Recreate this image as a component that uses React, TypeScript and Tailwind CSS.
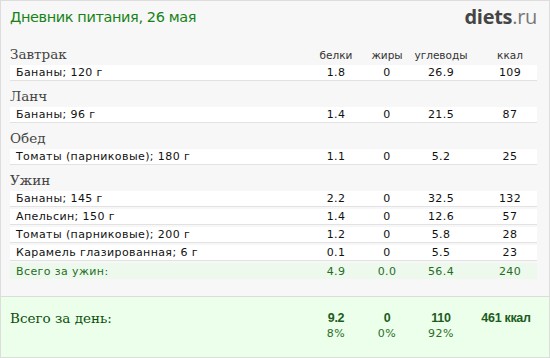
type Row = [string, string, string, string, string]

const meals: { title: string; items: Row[]; total?: Row }[] = [
  { title: 'Завтрак', items: [['Бананы; 120 г', '1.8', '0', '26.9', '109']] },
  { title: 'Ланч', items: [['Бананы; 96 г', '1.4', '0', '21.5', '87']] },
  { title: 'Обед', items: [['Томаты (парниковые); 180 г', '1.1', '0', '5.2', '25']] },
  {
    title: 'Ужин',
    items: [
      ['Бананы; 145 г', '2.2', '0', '32.5', '132'],
      ['Апельсин; 150 г', '1.4', '0', '12.6', '57'],
      ['Томаты (парниковые); 200 г', '1.2', '0', '5.8', '28'],
      ['Карамель глазированная; 6 г', '0.1', '0', '5.5', '23'],
    ],
    total: ['Всего за ужин:', '4.9', '0.0', '56.4', '240'],
  },
]

const cols = 'grid grid-cols-[1fr_50px_52px_56px_68px] items-center'

function Line({ row, total }: { row: Row; total?: boolean }) {
  return (
    <div
      className={
        cols +
        ' h-[16px] mb-[2px] text-[11px] tracking-[0.4px] font-["DejaVu_Sans",sans-serif] ' +
        (total ? 'bg-[#eef9ee] text-[#1f6e1f]' : 'bg-white border-b border-[#e2e2e2] text-[#111]')
      }
    >
      <div className="pl-[6px] leading-none">{row[0]}</div>
      <div className="text-center leading-none">{row[1]}</div>
      <div className="text-center leading-none">{row[2]}</div>
      <div className="text-center leading-none">{row[3]}</div>
      <div className="text-center pl-[14px] leading-none">{row[4]}</div>
    </div>
  )
}

export default function App() {
  return (
    <div className="w-[550px] h-[358px] bg-[#f7f7f7] border border-[#dddddd] flex flex-col overflow-hidden">
      <div className="flex justify-between items-center h-[40px] pl-[9px] pr-[12px]">
        <div className="text-[14.5px] text-[#178317] font-['DejaVu_Sans',sans-serif] tracking-[-0.4px] pb-[7px]">
          Дневник питания, 26 мая
        </div>
        <div className="font-['Open_Sans',sans-serif] text-[20px] text-[#454545] pb-[9px] tracking-[-0.3px]">
          <span className="font-bold">diets</span>
          <span className="text-[#777]">.ru</span>
        </div>
      </div>

      <div className="pl-[9px] pr-[12px]">
        {meals.map((m, i) => (
          <div key={m.title}>
            <div className={cols + ' h-[24px] items-end pb-[3px]'}>
              <div className="font-['DejaVu_Serif',serif] text-[13.5px] text-[#444] leading-[16px]">{m.title}</div>
              {i === 0 &&
                ['белки', 'жиры', 'углеводы', 'ккал'].map((h, j) => (
                  <div
                    key={h}
                    className={
                      'text-center text-[10.5px] text-[#333] font-["DejaVu_Sans",sans-serif] leading-[14px] ' +
                      (j === 3 ? 'pl-[14px]' : '')
                    }
                  >
                    {h}
                  </div>
                ))}
            </div>
            {m.items.map((r) => (
              <Line key={r[0]} row={r} />
            ))}
            {m.total && <Line row={m.total} total />}
          </div>
        ))}
      </div>

      <div className="mt-auto h-[61px] bg-[#ebffea] border-t border-[#dcdcdc] pl-[9px] pr-[12px] pt-[13px]">
        <div className={cols}>
          <div className="font-['DejaVu_Serif',serif] text-[13.5px] text-[#0d4f0d] leading-[16px]">Всего за день:</div>
          {['9.2', '0', '110', '461 ккал'].map((v, j) => (
            <div
              key={v}
              className={
                'text-center font-bold text-[12.5px] text-[#1d5c1d] font-["Liberation_Sans",sans-serif] tracking-[-0.3px] leading-[16px] ' +
                (j === 3 ? 'pl-[6px]' : '')
              }
            >
              {v}
            </div>
          ))}
        </div>
        <div className={cols + ' mt-[1px]'}>
          <div />
          {['8%', '0%', '92%'].map((v) => (
            <div
              key={v}
              className="text-center text-[11px] tracking-[0.5px] text-[#2b6e2b] font-['DejaVu_Sans',sans-serif] leading-[14px]"
            >
              {v}
            </div>
          ))}
          <div />
        </div>
      </div>
    </div>
  )
}
